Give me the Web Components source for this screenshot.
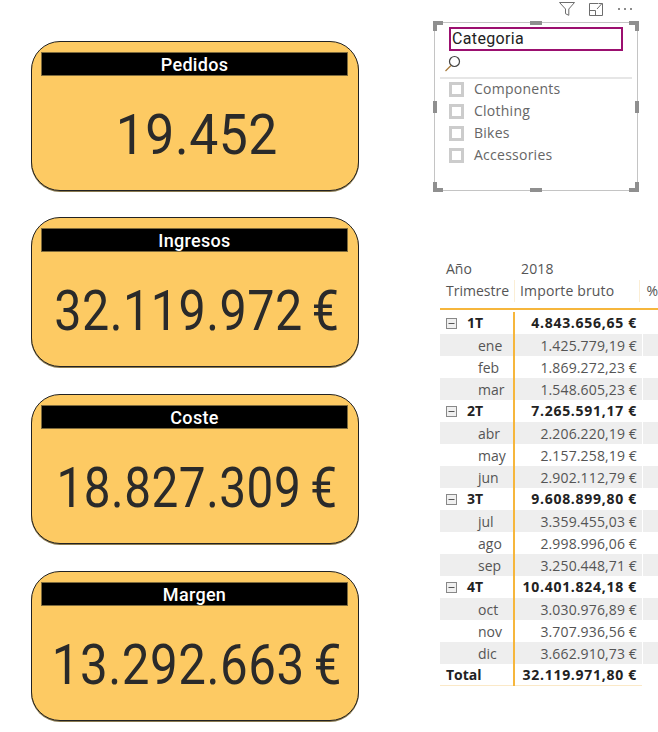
<!DOCTYPE html>
<html><head><meta charset="utf-8"><style>
html,body{margin:0;padding:0;background:#fff;width:658px;height:732px;overflow:hidden}
kpi-card:nth-of-type(4){margin-top:1px}
</style></head><body>
<app-page>
<kpi-card slot="left" label="Pedidos" value="19.452" sx=".923"></kpi-card>
<kpi-card slot="left" label="Ingresos" value="32.119.972 €" sx=".865"></kpi-card>
<kpi-card slot="left" label="Coste" value="18.827.309 €" sx=".852"></kpi-card>
<kpi-card slot="left" label="Margen" value="13.292.663 €" sx=".88"></kpi-card>
<category-slicer slot="right"></category-slicer>
<sales-matrix slot="right"></sales-matrix>
</app-page>
<script>
function el(html){const t=document.createElement('template');t.innerHTML=html;return t.content.cloneNode(true)}
class AppPage extends HTMLElement{constructor(){super();this.attachShadow({mode:'open'}).append(el(`<style>
:host{display:flex;width:658px;height:732px;overflow:hidden;font-family:"Open Sans","Liberation Sans",sans-serif}
.left{width:328px;margin-left:31px;padding-top:41px;display:flex;flex-direction:column;gap:26.4px;flex:none}
.right{margin-left:75px;flex:1;min-width:0;display:flex;flex-direction:column}
</style><div class="left"><slot name="left"></slot></div><div class="right"><slot name="right"></slot></div>`))}}
customElements.define('app-page',AppPage);
class KpiCard extends HTMLElement{constructor(){super();this.attachShadow({mode:'open'}).append(el(`<style>
:host{display:flex;flex-direction:column;align-items:center;box-sizing:border-box;height:150px;background:#fdca63;border:1px solid #222;border-radius:29px;padding:11px 10px 0 10px;box-shadow:0 1px 0 #8a7a50}
.h{align-self:stretch;margin-right:1px;height:22px;background:#000;color:#fff;font:500 18px/23px Roboto,sans-serif;text-align:center;letter-spacing:.3px;outline:1px solid #7d6a3c}
.v{margin:25px 0 0 4px;font:400 56px/70px Roboto,sans-serif;color:#2a2a2a;white-space:nowrap;display:inline-block;letter-spacing:.6px;word-spacing:-4px}
</style><div class="h"></div><div class="v"></div>`));
const v=this.shadowRoot.querySelector('.v');
this.shadowRoot.querySelector('.h').textContent=this.getAttribute('label');v.textContent=this.getAttribute('value');v.style.transform=`scaleX(${this.getAttribute('sx')})`}}
customElements.define('kpi-card',KpiCard);
class CategorySlicer extends HTMLElement{constructor(){super();
const items=['Components','Clothing','Bikes','Accessories'].map(s=>`<div class="i"><span class="c"></span><span>${s}</span></div>`).join('');
this.attachShadow({mode:'open'}).append(el(`<style>
:host{display:block;width:204px;position:relative;flex:none}
.tools{height:22px;display:flex;justify-content:flex-end;align-items:flex-start;gap:13px;padding:2px 5px 0 0;box-sizing:border-box}
.tools svg{display:block}
.box{box-sizing:border-box;height:169px;border:1px solid #c4c4c4;padding:4px 14px 0 5px;position:relative}
.title{box-sizing:border-box;margin-left:9px;height:24px;border:2px solid #9b0f6f;font:400 16px/20px Roboto,"Open Sans",sans-serif;color:#222;padding-left:1px;width:174px;letter-spacing:.35px}
.s{height:25px;display:flex;align-items:center;padding-left:4px}
.rule{height:2px;background:#e6e6e6;margin-top:1px;width:192px}
.list{margin-left:9px;margin-top:-1px}
.i{height:22px;display:flex;align-items:center;gap:10px;font:14px/22px "Open Sans",sans-serif;color:#666;letter-spacing:.25px}
.c{box-sizing:border-box;width:15px;height:15px;border:3px solid #ccc;background:#fff}
.hd{position:absolute;background:#8f8f8f}
</style>
<div class="tools">
<svg width="16" height="14" viewBox="0 0 16 14" fill="none" stroke="#6d6d6d" stroke-width="1"><path d="M.5.5h15L9.8 7v6.3l-3.3-1.6V7z"/></svg>
<svg width="16" height="14" viewBox="0 0 16 14" fill="none" stroke="#6d6d6d" stroke-width="1"><path d="M10 1.5H1.5v12h13V5M1.5 8.5h6v5M9 7l5-5.5M10.5 1.5h4v4"/></svg>
<svg width="16" height="14" viewBox="0 0 16 14" fill="#666"><circle cx="2" cy="7" r="1"/><circle cx="8" cy="7" r="1"/><circle cx="14" cy="7" r="1"/></svg>
</div>
<div class="box">
<div class="title">Categoria</div>
<div class="s"><svg width="17" height="17" viewBox="0 0 17 17" fill="none" stroke="#444" stroke-width="1.2"><circle cx="10.5" cy="6.5" r="5"/><path d="M7 10.5L1.5 16" stroke="#a87a3c"/></svg></div>
<div class="rule"></div>
<div class="list">${items}</div>
<i class="hd" style="left:-2px;top:-2px;width:10px;height:4px"></i><i class="hd" style="left:-2px;top:-2px;width:4px;height:10px"></i>
<i class="hd" style="right:-2px;top:-2px;width:10px;height:4px"></i><i class="hd" style="right:-2px;top:-2px;width:4px;height:10px"></i>
<i class="hd" style="left:-2px;bottom:-2px;width:10px;height:4px"></i><i class="hd" style="left:-2px;bottom:-2px;width:4px;height:10px"></i>
<i class="hd" style="right:-2px;bottom:-2px;width:10px;height:4px"></i><i class="hd" style="right:-2px;bottom:-2px;width:4px;height:10px"></i>
<i class="hd" style="left:95px;top:-2px;width:12px;height:4px"></i><i class="hd" style="left:95px;bottom:-2px;width:12px;height:4px"></i>
<i class="hd" style="left:-2px;top:78px;width:4px;height:12px"></i><i class="hd" style="right:-2px;top:78px;width:4px;height:12px"></i>
</div>`))}}
customElements.define('category-slicer',CategorySlicer);
class SalesMatrix extends HTMLElement{constructor(){super();
const data=[['1T','4.843.656,65 €',[['ene','1.425.779,19 €'],['feb','1.869.272,23 €'],['mar','1.548.605,23 €']]],
['2T','7.265.591,17 €',[['abr','2.206.220,19 €'],['may','2.157.258,19 €'],['jun','2.902.112,79 €']]],
['3T','9.608.899,80 €',[['jul','3.359.455,03 €'],['ago','2.998.996,06 €'],['sep','3.250.448,71 €']]],
['4T','10.401.824,18 €',[['oct','3.030.976,89 €'],['nov','3.707.936,56 €'],['dic','3.662.910,73 €']]]];
const box=`<svg width="11" height="11" viewBox="0 0 11 11" fill="none" stroke="#888"><rect x=".5" y=".5" width="10" height="10" fill="#f0f0f0"/><path d="M2.5 5.5h6" stroke="#555"/></svg>`;
let rows='';
for(const[q,v,ms]of data){rows+=`<div class="r b"><div class="a"><span class="tg">${box}</span>${q}</div><div class="m">${v}</div><div class="x"></div></div>`;
ms.forEach((mm,i)=>{rows+=`<div class="r n ${i%2==0?'g':''}"><div class="a sub">${mm[0]}</div><div class="m">${mm[1]}</div><div class="x"></div></div>`})}
rows+=`<div class="r b t"><div class="a">Total</div><div class="m">32.119.971,80 €</div></div>`;
this.attachShadow({mode:'open'}).append(el(`<style>
:host{display:block;width:218px;margin-top:67px;margin-left:6px;font:14px/22px "Open Sans",sans-serif;color:#444;overflow:hidden;flex:none}
.hr{display:flex;height:22px;color:#555}
.hr .a{width:75px;padding-left:6px;box-sizing:border-box}
.hr .m{width:127px;padding-left:6px;box-sizing:border-box;border:0;text-align:left}
.hr.two .m{border-left:1px solid #fbeed5;padding-left:5px}
.hr .x{padding-left:6px;border-left:1px solid #fbeed5;flex:1;box-sizing:border-box}
.line{height:2px;background:#f6b63c;margin-top:6px}
.r{display:flex;height:22px;box-sizing:border-box}
.n{line-height:24px}
.rows{padding-top:2px}
.a{width:73px;box-sizing:border-box;padding-left:6px;white-space:nowrap}
.sub{padding-left:38px;color:#555}
.m{width:129px;box-sizing:border-box;text-align:right;padding-right:5px;border-left:2px solid #f6b63c;white-space:nowrap;color:#555;letter-spacing:.14px}
.x{flex:1;border-left:1px solid #fff}
.b .a,.b .m{font-weight:700;color:#222}
.b .m{letter-spacing:.72px}
.g{background:#eee}
.tg{display:inline-block;width:21px;vertical-align:-1px}
.tg svg{display:inline-block}
.t{box-shadow:inset 0 -1px 0 #fbe9c8;width:202px}
</style>
<div class="hr"><div class="a">Año</div><div class="m">2018</div></div>
<div class="hr two"><div class="a">Trimestre</div><div class="m">Importe bruto</div><div class="x">%</div></div>
<div class="line"></div>
<div class="rows">${rows}</div>`))}}
customElements.define('sales-matrix',SalesMatrix);
</script>
</body></html>
